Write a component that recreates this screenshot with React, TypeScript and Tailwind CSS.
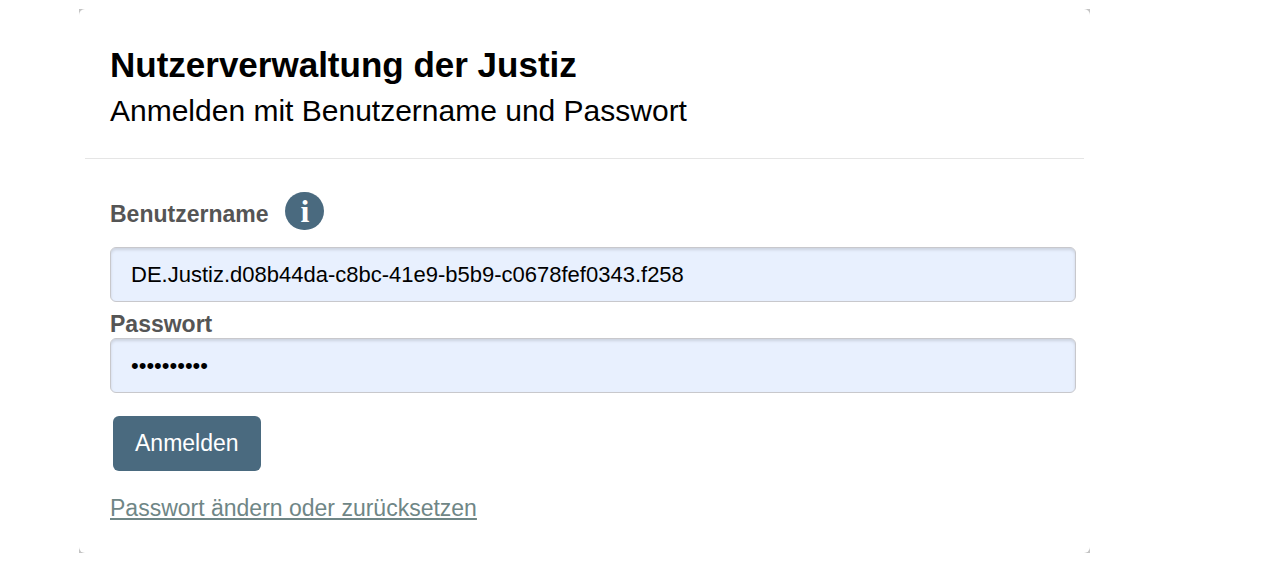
import { useState } from 'react'

const inputClass =
  'block h-[55px] w-full rounded-md border border-[#c8c8cc] bg-[#e8f0fe] px-5 text-[22px] text-black shadow-[inset_0_2px_3px_rgba(0,0,0,0.12)] outline-none'

function InfoButton() {
  return (
    <button
      type="button"
      aria-label="Hinweis zum Benutzernamen"
      className="flex h-[38px] w-[39px] items-center justify-center rounded-full bg-[#4a6a7f] text-white"
    >
      <span className="font-['Liberation_Serif',serif] text-[32px] leading-[38px] font-bold">i</span>
    </button>
  )
}

function LoginForm() {
  const [username, setUsername] = useState('DE.Justiz.d08b44da-c8bc-41e9-b5b9-c0678fef0343.f258')
  const [password, setPassword] = useState('geheim1234')

  return (
    <form className="pt-[33px] pr-[14px] pb-[30px] pl-[31px]" onSubmit={e => e.preventDefault()}>
      <div className="mb-[17px] flex items-start gap-[17px]">
        <label htmlFor="username" className="pt-2 text-[23px] leading-7 font-bold text-[#555]">
          Benutzername
        </label>
        <InfoButton />
      </div>
      <input
        id="username"
        type="text"
        value={username}
        onChange={e => setUsername(e.target.value)}
        className={inputClass}
      />
      <label htmlFor="password" className="mt-2 block text-[23px] leading-7 font-bold text-[#555]">
        Passwort
      </label>
      <input
        id="password"
        type="password"
        value={password}
        onChange={e => setPassword(e.target.value)}
        className={inputClass}
      />
      <button
        type="submit"
        className="mt-[23px] ml-[3px] block h-[55px] rounded-md bg-[#4a6a7f] px-[22px] text-[23px] text-white"
      >
        Anmelden
      </button>
      <a href="#reset" className="mt-[23px] inline-block text-[23px] leading-7 text-[#6f8686] underline">
        Passwort ändern oder zurücksetzen
      </a>
    </form>
  )
}

export default function App() {
  return (
    <div className="bg-white pt-[9px] pr-[183px] pl-[79px] font-['Liberation_Sans',Arial,sans-serif] text-black">
      <main className="bg-[#c4c4c4]">
        <div className="rounded-md bg-white">
          <header className="mx-[6px] border-b border-[#e5e5e5] pt-9 pb-[29px] pl-[25px]">
            <h1 className="text-[35px] leading-10 font-bold">Nutzerverwaltung der Justiz</h1>
            <p className="mt-2 text-[30px] leading-9">Anmelden mit Benutzername und Passwort</p>
          </header>
          <LoginForm />
        </div>
      </main>
    </div>
  )
}
